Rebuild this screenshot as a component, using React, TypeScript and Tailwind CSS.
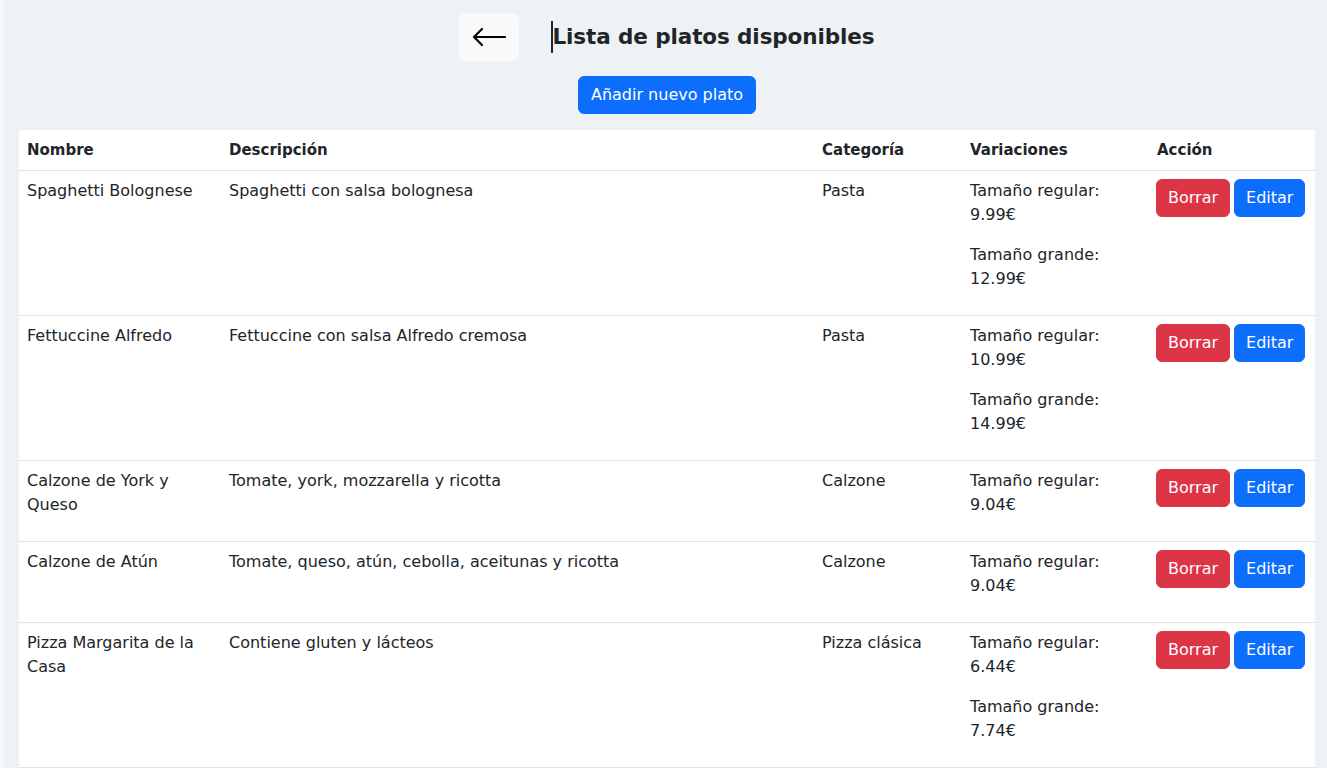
import React from "react";

interface Variation {
  size: string;
  price: string;
}

interface Dish {
  id: number;
  name: string;
  description: string;
  category: string;
  variations: Variation[];
}

const dishes: Dish[] = [
  {
    id: 1,
    name: "Spaghetti Bolognese",
    description: "Spaghetti con salsa bolognesa",
    category: "Pasta",
    variations: [
      { size: "Tamaño regular", price: "9.99€" },
      { size: "Tamaño grande", price: "12.99€" },
    ],
  },
  {
    id: 2,
    name: "Fettuccine Alfredo",
    description: "Fettuccine con salsa Alfredo cremosa",
    category: "Pasta",
    variations: [
      { size: "Tamaño regular", price: "10.99€" },
      { size: "Tamaño grande", price: "14.99€" },
    ],
  },
  {
    id: 3,
    name: "Calzone de York y Queso",
    description: "Tomate, york, mozzarella y ricotta",
    category: "Calzone",
    variations: [{ size: "Tamaño regular", price: "9.04€" }],
  },
  {
    id: 4,
    name: "Calzone de Atún",
    description: "Tomate, queso, atún, cebolla, aceitunas y ricotta",
    category: "Calzone",
    variations: [{ size: "Tamaño regular", price: "9.04€" }],
  },
  {
    id: 5,
    name: "Pizza Margarita de la Casa",
    description: "Contiene gluten y lácteos",
    category: "Pizza clásica",
    variations: [
      { size: "Tamaño regular", price: "6.44€" },
      { size: "Tamaño grande", price: "7.74€" },
    ],
  },
];

function ArrowLeft() {
  return (
    <svg width="34" height="20" viewBox="0 0 34 20" fill="none">
      <path
        d="M33 10H2M10 2L2 10L10 18"
        stroke="#000"
        strokeWidth="2.2"
        strokeLinecap="round"
        strokeLinejoin="round"
      />
    </svg>
  );
}

export default function App() {
  return (
    <div
      className="flex min-h-screen bg-[#eff2f4] text-[#212529]"
      style={{ fontFamily: '"DejaVu Sans", "Noto Sans", sans-serif' }}
    >
      {/* left edge shade */}
      <div className="w-[7px] shrink-0 bg-gradient-to-r from-[#f8f9fa] to-[#eff2f4]" />

      <div className="flex-1 px-3 pt-[13px]">
        {/* Header */}
        <div className="flex items-center justify-center">
          <button className="flex h-[48px] w-[60px] items-center justify-center rounded-md bg-[#f8f9fa]">
            <ArrowLeft />
          </button>
          <div className="relative ml-[33px]">
            <span className="absolute left-[-1px] top-0 h-[32px] w-[2px] bg-[#212529]" />
            <h4 className="text-[21.5px] font-bold leading-[32px] tracking-[-0.1px] text-[#212529]">
              Lista de platos disponibles
            </h4>
          </div>
        </div>

        <div className="mt-[15px] flex justify-center">
          <button className="rounded-md border border-[#0d6efd] bg-[#0d6efd] px-3 py-[6px] text-base leading-6 text-white">
            Añadir nuevo plato
          </button>
        </div>

        {/* Table */}
        <table className="mt-4 w-full table-fixed border-collapse bg-white text-base leading-6">
          <colgroup>
            <col className="w-[202px]" />
            <col className="w-[593px]" />
            <col className="w-[148px]" />
            <col className="w-[187px]" />
            <col className="w-[166px]" />
          </colgroup>
          <thead>
            <tr className="border-b border-[#dee2e6] text-left">
              <th className="p-2 text-[15px] font-bold">Nombre</th>
              <th className="p-2 text-[15px] font-bold">Descripción</th>
              <th className="p-2 text-[15px] font-bold">Categoría</th>
              <th className="p-2 text-[15px] font-bold">Variaciones</th>
              <th className="p-2 text-[15px] font-bold">Acción</th>
            </tr>
          </thead>
          <tbody>
            {dishes.map((dish) => (
              <tr key={dish.id} className="border-b border-[#dee2e6] align-top">
                <td className="p-2">{dish.name}</td>
                <td className="p-2">{dish.description}</td>
                <td className="p-2">{dish.category}</td>
                <td className="p-2">
                  {dish.variations.map((v) => (
                    <p key={v.size} className="mb-4">
                      {v.size}: {v.price}
                    </p>
                  ))}
                </td>
                <td className="py-2 pl-[7px] pr-2">
                  <div className="flex gap-1">
                    <button className="rounded-md border border-[#dc3545] bg-[#dc3545] px-[11px] py-[6px] leading-6 text-white">
                      Borrar
                    </button>
                    <button className="rounded-md border border-[#0d6efd] bg-[#0d6efd] px-[11px] py-[6px] leading-6 text-white">
                      Editar
                    </button>
                  </div>
                </td>
              </tr>
            ))}
          </tbody>
        </table>
      </div>
    </div>
  );
}
